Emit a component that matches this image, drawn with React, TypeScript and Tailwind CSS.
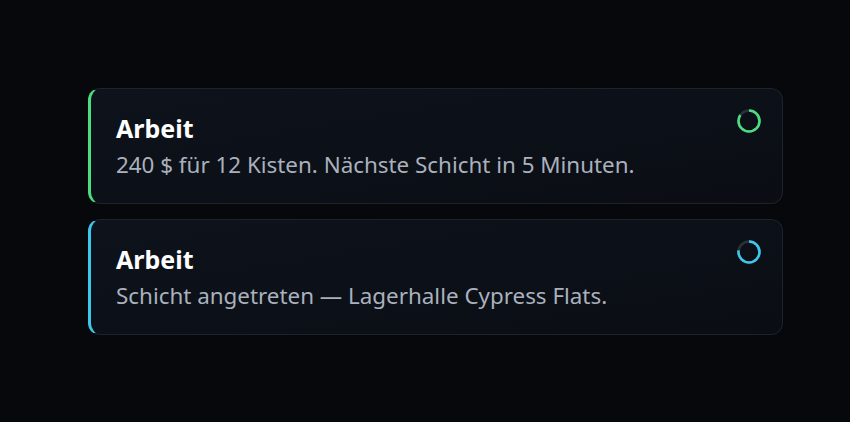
import React from "react"

type Notice = {
    title: string
    body: string
    accent: string
    border: string
    progress: number
}

const notices: Notice[] = [
    {
        title: "Arbeit",
        body: "240 $ für 12 Kisten. Nächste Schicht in 5 Minuten.",
        accent: "#4ade80",
        border: "border-l-[#4ade80]",
        progress: 0.84,
    },
    {
        title: "Arbeit",
        body: "Schicht angetreten — Lagerhalle Cypress Flats.",
        accent: "#3cc8ec",
        border: "border-l-[#3cc8ec]",
        progress: 0.77,
    },
]

function Ring({ color, progress }: { color: string; progress: number }) {
    const r = 10.5
    const c = 2 * Math.PI * r
    return (
        <svg width="26" height="26" viewBox="0 0 26 26" className="shrink-0">
            <circle cx="13" cy="13" r={r} fill="none" stroke="#2b3038" strokeWidth="2.6" />
            <circle
                cx="13"
                cy="13"
                r={r}
                fill="none"
                stroke={color}
                strokeWidth="2.6"
                strokeDasharray={`${c * progress} ${c}`}
                transform="rotate(-90 13 13)"
            />
        </svg>
    )
}

export default function App() {
    return (
        <div className="min-h-[422px] w-full bg-[#06080b] pt-[88px] pl-[88px] font-['Noto_Sans',sans-serif]">
            <div className="flex w-[695px] flex-col gap-[15px]">
                {notices.map((n, i) => (
                    <div
                        key={i}
                        className={`flex items-start justify-between rounded-xl border border-[#1d222b] border-l-[3px] ${n.border} bg-gradient-to-br from-[#0e131b] to-[#0a0d14] pl-[25px] pr-[20px] pt-[24px] pb-[23px]`}
                    >
                        <div className="flex flex-col">
                            <div className="text-[25px] font-bold leading-[30px] text-white">{n.title}</div>
                            <div className="mt-[7px] text-[22.4px] leading-[30px] text-[#aab1bd]">{n.body}</div>
                        </div>
                        <div className="-mt-[5px]">
                            <Ring color={n.accent} progress={n.progress} />
                        </div>
                    </div>
                ))}
            </div>
        </div>
    )
}
